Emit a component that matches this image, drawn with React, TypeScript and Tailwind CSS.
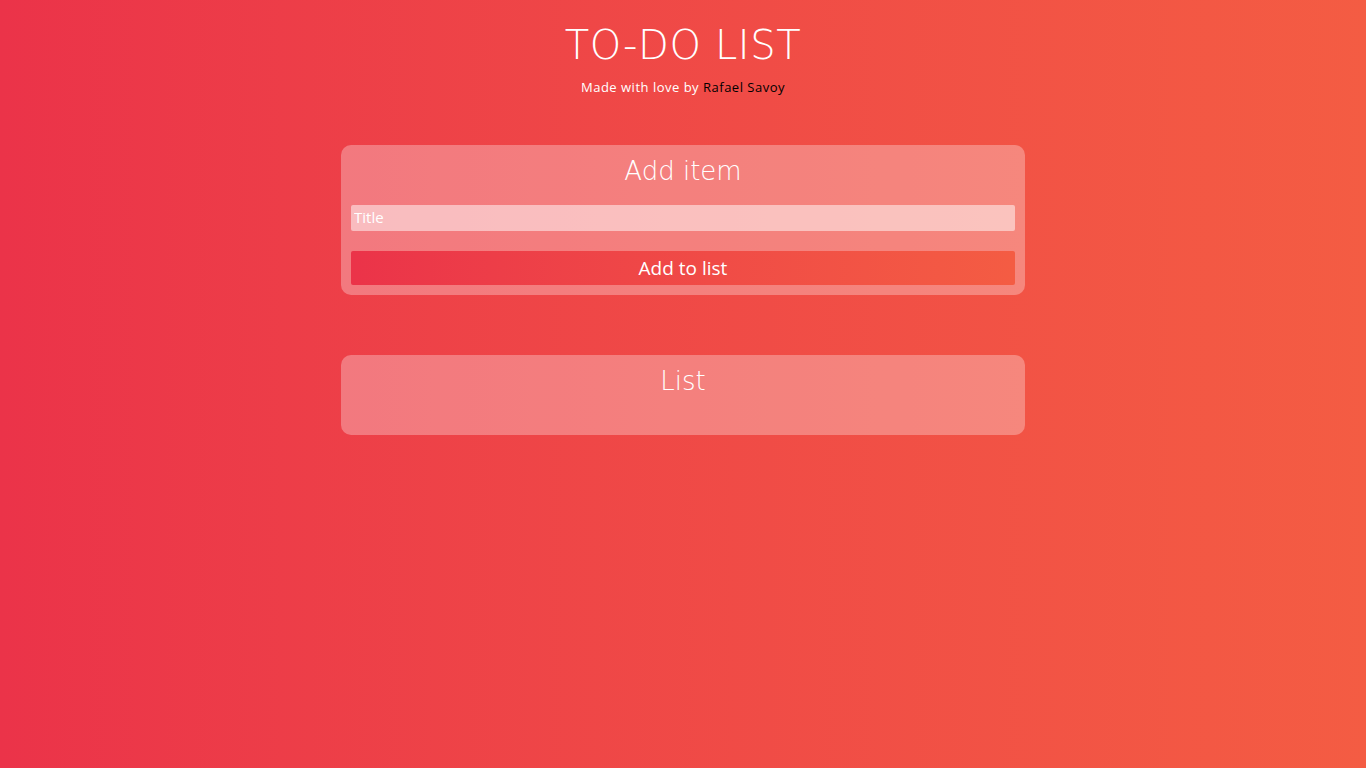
import React from "react";

const headFont = "font-['DejaVu_Sans',sans-serif]";
const bodyFont = "font-['Open_Sans',sans-serif]";

const Panel: React.FC<{ title: string; children?: React.ReactNode }> = ({ title, children }) => {
    return (
        <section className="w-[684px] rounded-[10px] bg-white/30 p-[10px]">
            <h2 className={`${headFont} font-extralight text-[26px] leading-[30px] pt-[1px] text-white text-center`}>{title}</h2>
            {children}
        </section>
    );
};

export default function App() {
    return (
        <div className="min-h-[768px] w-full bg-gradient-to-r from-[#eb3349] to-[#f45c43] flex flex-col items-center">
            <header className="pt-[21px] flex flex-col items-center">
                <h1 className={`${headFont} font-extralight text-[40px] leading-[48px] tracking-[0.6px] text-white`}>TO-DO LIST</h1>
                <p className={`${bodyFont} text-[13px] leading-[16px] tracking-[0.5px] text-white mt-[10px]`}>
                    Made with love by <a className="text-black">Rafael Savoy</a>
                </p>
            </header>

            <main className="mt-[50px] flex flex-col gap-[60px]">
                <Panel title="Add item">
                    <input
                        type="text"
                        placeholder="Title"
                        className={`${bodyFont} mt-[19px] block w-full h-[26px] rounded-[2px] bg-white/50 px-[3px] pb-[2px] text-[15px] text-white placeholder:text-white outline-none`}
                    />
                    <button
                        className={`${bodyFont} mt-[20px] block w-full h-[34px] rounded-[2px] bg-gradient-to-r from-[#eb3349] to-[#f45c43] text-[19px] font-medium text-white`}
                    >
                        Add to list
                    </button>
                </Panel>

                <Panel title="List">
                    <ul className="h-[29px]"></ul>
                </Panel>
            </main>
        </div>
    );
}
